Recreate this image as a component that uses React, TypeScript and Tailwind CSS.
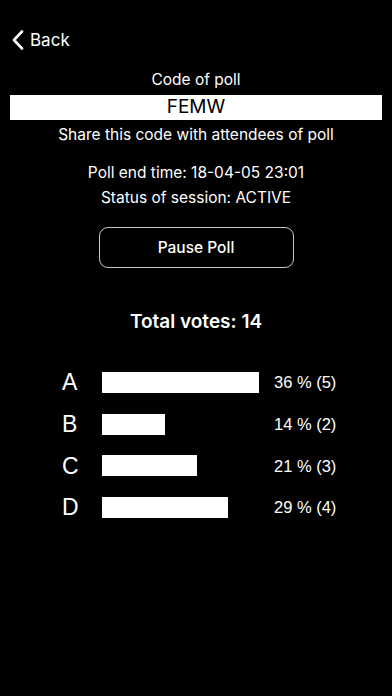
import React from "react";

const options = [
    { label: "A", width: 157, text: "36 % (5)" },
    { label: "B", width: 63, text: "14 % (2)" },
    { label: "C", width: 95, text: "21 % (3)" },
    { label: "D", width: 126, text: "29 % (4)" },
];

export default function App() {
    return (
        <div className="min-h-[696px] w-[392px] bg-black text-white" style={{ fontFamily: "Inter, 'Liberation Sans', sans-serif" }}>
            <div className="flex h-[80px] items-start pt-[29px] pl-[12px]">
                <button className="flex items-center gap-[6px] text-[17px] leading-[22px]">
                    <svg width="12" height="20" viewBox="0 0 12 20" fill="none" stroke="white" strokeWidth="2.6" strokeLinecap="round" strokeLinejoin="round">
                        <path d="M10 1.5 L2 10 L10 18.5" />
                    </svg>
                    <span>Back</span>
                </button>
            </div>

            <div className="flex flex-col items-center">
                <div className="-mt-[10px] text-[15.5px] leading-[20px]">Code of poll</div>
                <div className="mt-[5px] mx-[10px] flex h-[25px] w-[372px] items-center justify-center bg-white text-[19px] text-black">FEMW</div>
                <div className="mt-[5px] text-[15.5px] leading-[20px]">Share this code with attendees of poll</div>

                <div className="mt-[18px] text-[15.5px] leading-[20px]">Poll end time: 18-04-05 23:01</div>
                <div className="mt-[5px] text-[15.5px] leading-[20px]">Status of session: ACTIVE</div>

                <button className="mt-[19px] flex h-[41px] w-[195px] items-center justify-center rounded-[9px] border border-[#c8c8c8] text-[15.5px] font-medium">
                    Pause Poll
                </button>

                <div className="mt-[42px] text-[19px] font-semibold leading-[24px]">Total votes: 14</div>
            </div>

            <div className="mt-[38px] flex flex-col gap-[20.7px] pl-[62px]" style={{ fontFamily: "'Liberation Sans', sans-serif" }}>
                {options.map((o) => (
                    <div key={o.label} className="flex h-[21px] items-center">
                        <span className="w-[40px] text-[23px]">{o.label}</span>
                        <div className="w-[172px]">
                            <div className="h-[21px] bg-white" style={{ width: o.width }} />
                        </div>
                        <span className="text-[16.5px]">{o.text}</span>
                    </div>
                ))}
            </div>
        </div>
    );
}
